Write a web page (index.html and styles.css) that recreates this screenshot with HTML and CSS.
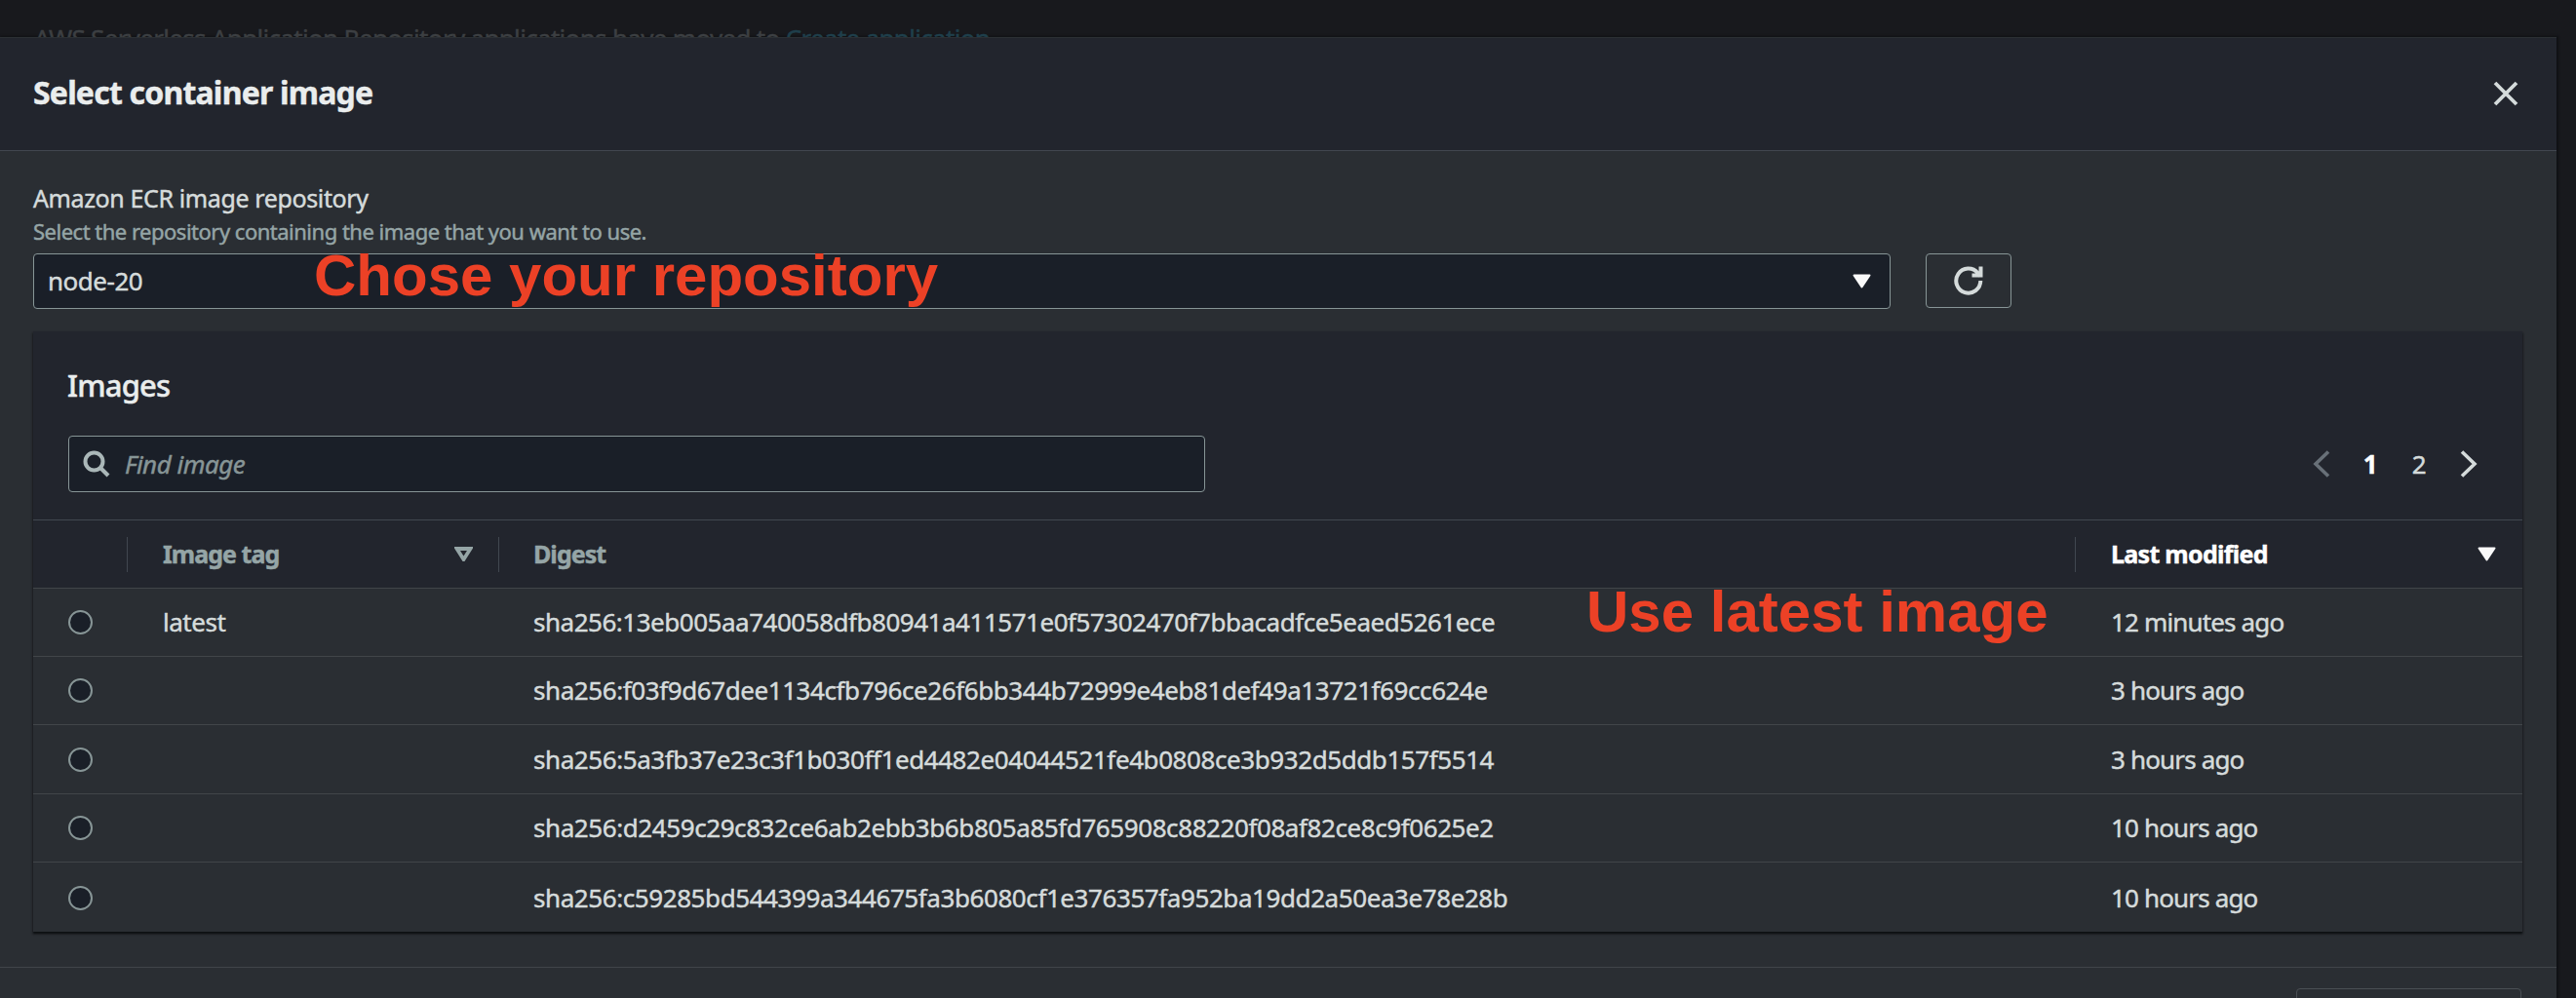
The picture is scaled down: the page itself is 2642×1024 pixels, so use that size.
FILE: index.html
```html
<!DOCTYPE html>
<html lang="en">
<head>
<meta charset="utf-8">
<title>Select container image</title>
<link rel="stylesheet" href="styles.css">
</head>
<body>
<div class="page-behind">AWS Serverless Application Repository applications have moved to <a class="page-link">Create application</a>.</div>
<main class="modal">
  <header class="modal-header">
    <h1 class="modal-title">Select container image</h1>
    <svg class="close" width="26" height="26" viewBox="0 0 26 26"><path d="M2 2 24 24M24 2 2 24"/></svg>
  </header>
  <section class="modal-body">
    <div class="label">Amazon ECR image repository</div>
    <div class="description">Select the repository containing the image that you want to use.</div>
    <div class="select-row">
      <div class="select">
        <span class="value">node-20</span>
        <svg class="caret" width="19" height="15" viewBox="0 0 19 15"><path d="M1.5 1.5h16l-8 12z"/></svg>
        <span class="note note-repository">Chose your repository</span>
      </div>
      <button class="refresh" aria-label="Refresh">
        <svg width="30" height="30" viewBox="0 0 30 30"><path d="M27.3 15A12.5 12.5 0 1 1 24.5 7.2L27 10.6M27.5 .5V9.5H18.5"/></svg>
      </button>
    </div>
    <div class="images">
      <h2 class="images-title">Images</h2>
      <div class="toolbar">
        <div class="search">
          <svg width="28" height="28" viewBox="0 0 28 28"><circle cx="11.5" cy="11.5" r="9"/><path d="M18 18 26 26"/></svg>
          <span class="placeholder">Find image</span>
        </div>
        <nav class="pages">
          <svg class="prev" width="18" height="28" viewBox="0 0 18 28"><path d="M16 1.5 3 14 16 26.5"/></svg>
          <span class="page current">1</span>
          <span class="page">2</span>
          <svg class="next" width="18" height="28" viewBox="0 0 18 28"><path d="M2 1.5 15 14 2 26.5"/></svg>
        </nav>
      </div>
      <div class="row head">
        <div class="cell pick"></div>
        <div class="cell">Image tag<svg class="caret hollow" width="19" height="15" viewBox="0 0 19 15"><path d="M2.5 2h14l-7 11z"/></svg></div>
        <div class="cell digest">Digest</div>
        <div class="cell sorted">Last modified<svg class="caret" width="19" height="15" viewBox="0 0 19 15"><path d="M1.5 1.5h16l-8 12z"/></svg></div>
      </div>
      <div class="row">
        <div class="cell pick"><i class="radio"></i></div>
        <div class="cell">latest</div>
        <div class="cell digest">sha256:13eb005aa740058dfb80941a411571e0f57302470f7bbacadfce5eaed5261ece<span class="note note-latest">Use latest image</span></div>
        <div class="cell time">12 minutes ago</div>
      </div>
      <div class="row">
        <div class="cell pick"><i class="radio"></i></div>
        <div class="cell"></div>
        <div class="cell digest wide">sha256:f03f9d67dee1134cfb796ce26f6bb344b72999e4eb81def49a13721f69cc624e</div>
        <div class="cell time">3 hours ago</div>
      </div>
      <div class="row tall">
        <div class="cell pick"><i class="radio"></i></div>
        <div class="cell"></div>
        <div class="cell digest wide">sha256:5a3fb37e23c3f1b030ff1ed4482e04044521fe4b0808ce3b932d5ddb157f5514</div>
        <div class="cell time">3 hours ago</div>
      </div>
      <div class="row">
        <div class="cell pick"><i class="radio"></i></div>
        <div class="cell"></div>
        <div class="cell digest wide">sha256:d2459c29c832ce6ab2ebb3b6b805a85fd765908c88220f08af82ce8c9f0625e2</div>
        <div class="cell time">10 hours ago</div>
      </div>
      <div class="row last">
        <div class="cell pick"><i class="radio"></i></div>
        <div class="cell"></div>
        <div class="cell digest wide">sha256:c59285bd544399a344675fa3b6080cf1e376357fa952ba19dd2a50ea3e78e28b</div>
        <div class="cell time">10 hours ago</div>
      </div>
    </div>
  </section>
  <footer class="modal-footer"><div class="footer-button"></div></footer>
</main>
</body>
</html>
```
FILE: styles.css
```css
* { box-sizing: border-box; }
body {
  margin: 0;
  width: 2642px;
  height: 1024px;
  overflow: hidden;
  background: #18191d;
  color: #d5dbdb;
  font: 26px/36px "Noto Sans", "Open Sans", sans-serif;
  letter-spacing: -0.48px;
  white-space: nowrap;
  -webkit-text-stroke: 0.45px currentColor;
}
h1, h2 { margin: 0; }
svg { flex: none; fill: none; stroke: #d5dbdb; stroke-width: 3.6; }

.page-behind {
  height: 38px;
  padding: 21px 35px 0;
  overflow: hidden;
  color: #3c3f42;
  letter-spacing: -0.68px;
}
.page-link { color: #1f3f4b; }

.modal {
  width: 2622px;
  height: 986px;
  overflow: hidden;
  background: #2a2e33;
  border-top: 1px solid #2c3034;
  box-shadow: 1px 0 2px 1px #101114;
}
.modal-header {
  display: flex;
  align-items: center;
  justify-content: space-between;
  height: 116px;
  padding: 0 39px 2px 34px;
  background: #22252d;
  border-bottom: 1px solid #414750;
}
.modal-title {
  padding-bottom: 1px;
  color: #eaeded;
  font-size: 32px;
  line-height: 44px;
  letter-spacing: -0.8px;
}
.close { stroke-width: 3.8; }

.modal-body { height: 837px; padding: 30px 35px 0 34px; }
.label { font-size: 25px; letter-spacing: -0.38px; line-height: 36px; }
.description {
  color: #95a5a6;
  font-size: 22px;
  line-height: 33px;
  letter-spacing: -0.5px;
}
.select-row { display: flex; align-items: flex-start; gap: 36px; margin-top: 6px; }
.select {
  position: relative;
  display: flex;
  align-items: center;
  justify-content: space-between;
  width: 1905px;
  height: 57px;
  padding: 0 19px 0 14px;
  background: #1a1f28;
  border: 1px solid #879596;
  border-radius: 4px;
}
.value { padding-bottom: 1px; }
.caret { fill: #fafafa; stroke: #fafafa; stroke-width: 2; stroke-linejoin: round; }
.caret.hollow { fill: none; stroke: #95a5a6; stroke-width: 3.8; stroke-linejoin: miter; }
.refresh {
  display: flex;
  align-items: center;
  justify-content: center;
  width: 88px;
  height: 56px;
  padding: 0;
  background: none;
  border: 1px solid #879596;
  border-radius: 4px;
}
.refresh svg { stroke-width: 4; }

.note {
  position: absolute;
  color: #ec4126;
  font: 700 60px/68px "Liberation Sans", Arial, sans-serif;
  letter-spacing: 0;
  -webkit-text-stroke: 0;
}
.note-repository { left: 287px; top: -12px; }
.note-latest { left: 1115px; top: -10px; }

.images {
  width: 2553px;
  height: 616px;
  margin-top: 23px;
  background: #2a2e33;
  box-shadow: 0 2px 2px 0 #0d0f12, 0 2px 2px 0 #1c1f23;
}
.images-title {
  height: 107px;
  padding: 33px 35px 0;
  background: #22252d;
  color: #eaeded;
  font-size: 31px;
  font-weight: 500;
  line-height: 44px;
  letter-spacing: -0.8px;
}
.toolbar {
  display: flex;
  align-items: flex-start;
  justify-content: space-between;
  height: 86px;
  padding: 0 46px 0 36px;
  background: #22252d;
}
.search {
  display: flex;
  align-items: center;
  gap: 15px;
  width: 1166px;
  height: 58px;
  padding: 0 14px;
  background: #1a1f28;
  border: 1px solid #879596;
  border-radius: 4px;
}
.search svg { stroke: #aab7b8; stroke-width: 4; }
.placeholder { padding-bottom: 1px; color: #879596; font-style: italic; letter-spacing: -0.5px; }
.pages { display: flex; align-items: center; height: 58px; }
.page { width: 50px; text-align: center; }
.current { color: #fff; font-weight: 700; }
.prev { margin-right: 16px; stroke: #687078; }
.next { margin-left: 17px; }

.row {
  display: grid;
  grid-template-columns: 97px 381px 1617px 458px;
  height: 70px;
  border-top: 1px solid #414549;
}
.row.tall { height: 71px; }
.row.last { height: 73px; }
.cell {
  position: relative;
  display: flex;
  align-items: center;
  justify-content: space-between;
  padding: 0 27px 1px 36px;
}
.pick { padding-bottom: 0; }
.digest { padding-left: 35px; }
.wide { letter-spacing: -0.42px; }
.time { letter-spacing: -0.85px; }
.head {
  background: #22252d;
  border-color: #414750;
  color: #95a5a6;
  font-size: 25px;
  font-weight: 700;
  letter-spacing: -0.95px;
}
.head .cell::after {
  content: "";
  position: absolute;
  right: 0;
  top: 17px;
  width: 1px;
  height: 36px;
  background: #414750;
}
.head .cell:last-child::after { content: none; }
.head .sorted { color: #fff; letter-spacing: -0.7px; }
.radio {
  width: 25px;
  height: 25px;
  background: #1a1f28;
  border: 2px solid #879596;
  border-radius: 50%;
}

.modal-footer {
  display: flex;
  justify-content: flex-end;
  height: 60px;
  padding: 21px 36px 0;
  border-top: 1px solid #414549;
}
.footer-button {
  width: 231px;
  height: 56px;
  border: 1px solid #4a4f54;
  border-radius: 4px;
}
```
